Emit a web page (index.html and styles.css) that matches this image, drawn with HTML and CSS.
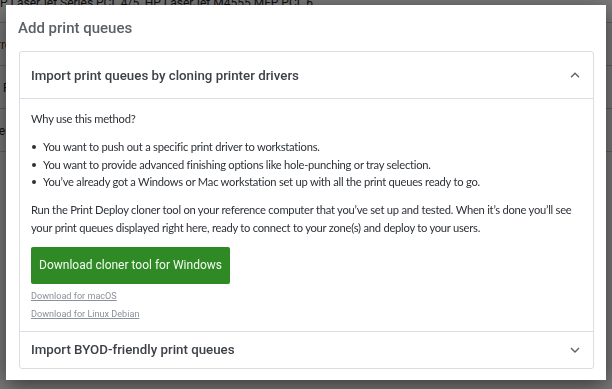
FILE: index.html
```html
<!DOCTYPE html>
<html lang="en">
<head>
<meta charset="utf-8">
<title>Add print queues</title>
<link rel="stylesheet" href="styles.css">
</head>
<body>
<div class="page">
  <div class="row row-first">P LaserJet Series PCL 4/5, HP LaserJet M4555 MFP PCL 6</div>
  <div class="row row-err">Error</div>
  <div class="row">HP Printer</div>
  <div class="row">Queue</div>
</div>
<div class="overlay"></div>
<div class="modal" role="dialog">
  <h1 class="modal-title">Add print queues</h1>
  <div class="card">
    <div class="acc-head acc-head-open">
      <span>Import print queues by cloning printer drivers</span>
      <svg class="chev" width="10" height="6" viewBox="0 0 10 6"><polyline points="1,5.2 5,1.2 9,5.2" fill="none" stroke="#5c636e" stroke-width="1.4"/></svg>
    </div>
    <div class="acc-body">
      <p class="why">Why use this method?</p>
      <ul class="reasons">
        <li>You want to push out a specific print driver to workstations.</li>
        <li>You want to provide advanced finishing options like hole-punching or tray selection.</li>
        <li>You’ve already got a Windows or Mac workstation set up with all the print queues ready to go.</li>
      </ul>
      <p class="desc">Run the Print Deploy cloner tool on your reference computer that you’ve set up and tested. When it’s done you’ll see your print queues displayed right here, ready to connect to your zone(s) and deploy to your users.</p>
      <a class="btn" href="#">Download cloner tool for Windows</a>
      <a class="dl" href="#">Download for macOS</a>
      <a class="dl" href="#">Download for Linux Debian</a>
    </div>
    <div class="acc-head acc-head-closed">
      <span>Import BYOD-friendly print queues</span>
      <svg class="chev" width="10" height="6" viewBox="0 0 10 6"><polyline points="1,1 5,5 9,1" fill="none" stroke="#5c636e" stroke-width="1.4"/></svg>
    </div>
  </div>
</div>
</body>
</html>
```

FILE: styles.css
```css
html, body {
  margin: 0;
  padding: 0;
  height: 100%;
  overflow: hidden;
}
body {
  font-family: "Lato", "Liberation Sans", sans-serif;
  background: #fff;
}
.page {
  font-family: "Roboto", "Liberation Sans", sans-serif;
  font-size: 12px;
  color: #222;
}
.row {
  height: 42px;
  line-height: 44px;
  border-bottom: 1px solid #ccc;
  white-space: nowrap;
  text-indent: -16px;
}
.row-first {
  height: 22px;
  line-height: 6px;
  text-indent: 0;
}
.row-err {
  color: #7a1f1f;
  text-indent: -10px;
}
.overlay {
  position: fixed;
  inset: 0;
  background: rgba(0, 0, 0, 0.52);
}
.modal {
  position: fixed;
  left: 6px;
  top: 5px;
  width: 600px;
  height: 375px;
  box-sizing: border-box;
  background: #fff;
  padding: 12px 12px;
  box-shadow: 0 6px 22px rgba(0, 0, 0, 0.55);
  display: flex;
  flex-direction: column;
}
.modal-title {
  margin: 0 0 12px 0;
  font-family: "Roboto", "Liberation Sans", sans-serif;
  font-weight: 500;
  font-size: 15px;
  line-height: 22px;
  color: #5b6067;
}
.card {
  margin-left: 1px;
  border: 1px solid #dcdde3;
  border-radius: 3px;
}
.acc-head {
  display: flex;
  align-items: center;
  justify-content: space-between;
  padding: 0 13px 0 11px;
  font-family: "Roboto", "Liberation Sans", sans-serif;
  font-weight: 500;
  font-size: 13.3px;
  color: #3d4147;
}
.acc-head-open {
  height: 46px;
  border-bottom: 1px solid #dcdde3;
}
.acc-head-closed {
  height: 36px;
  border-top: 1px solid #dcdde3;
}
.acc-body {
  padding: 11px 11px 10px 11px;
  font-size: 11.2px;
  letter-spacing: -0.25px;
  color: #2d3136;
  display: flex;
  flex-direction: column;
  align-items: flex-start;
}
.why {
  margin: 0;
  line-height: 18px;
}
.reasons {
  list-style: none;
  margin: 10px 0 0 0;
  padding: 0;
}
.reasons li {
  position: relative;
  padding-left: 12px;
  line-height: 17.5px;
}
.reasons li::before {
  content: "";
  position: absolute;
  left: 1px;
  top: 7px;
  width: 4px;
  height: 4px;
  border-radius: 50%;
  background: #2d3136;
}
.desc {
  margin: 10px 0 0 0;
  line-height: 18px;
}
.btn {
  margin-top: 10px;
  width: 199px;
  height: 37px;
  box-sizing: border-box;
  display: flex;
  align-items: center;
  justify-content: center;
  background: #2f8a25;
  border-radius: 2px;
  color: #f4fbf2;
  text-decoration: none;
  font-family: "Roboto", "Liberation Sans", sans-serif;
  font-size: 12px;
  letter-spacing: 0;
}
.dl {
  margin-top: 4px;
  line-height: 14px;
  font-family: "Roboto", "Liberation Sans", sans-serif;
  font-size: 9.1px;
  letter-spacing: 0;
  color: #8b9099;
  text-decoration: underline;
}
.btn + .dl {
  margin-top: 5px;
}
```
